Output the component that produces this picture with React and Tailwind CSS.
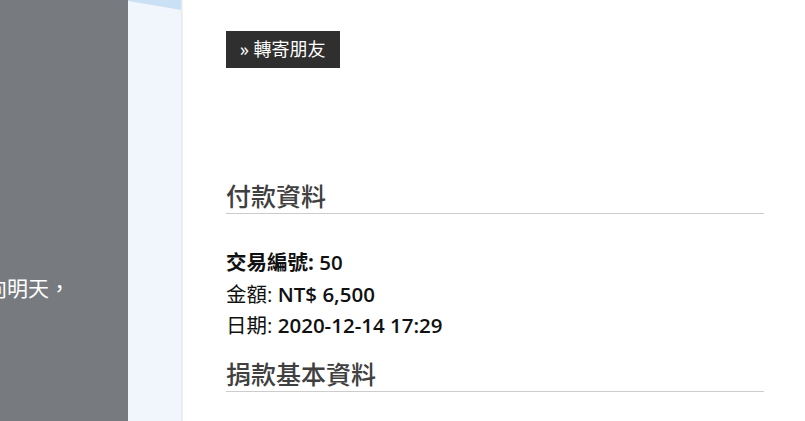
const rows = [
  { label: '交易編號', value: '50', bold: true },
  { label: '金額', value: 'NT$ 6,500' },
  { label: '日期', value: '2020-12-14 17:29' },
]

function SectionTitle({ children, className = '' }) {
  return (
    <h2 className={`border-b border-[#cccccc] pb-[2px] text-[25px] font-medium leading-[30px] text-[#404040] ${className}`}>
      {children}
    </h2>
  )
}

export default function App() {
  return (
    <div
      className="flex h-[421px] w-[805px] overflow-hidden bg-white"
      style={{ fontFamily: '"Open Sans", "Noto Sans CJK TC", sans-serif' }}
    >
      {/* left hero panel */}
      <div className="flex w-[128px] shrink-0 items-start overflow-hidden bg-[#777b7f] pt-[272px]">
        <p className="ml-[-14px] whitespace-nowrap text-[21px] leading-[32px] text-white">向明天，</p>
      </div>

      {/* light strip */}
      <div className="relative w-[53px] shrink-0 bg-[#f1f6fc]">
        <svg className="absolute left-0 top-0" width="53" height="12" viewBox="0 0 53 12">
          <polygon points="0,0 53,0 53,10 30,6 0,1" fill="#c9e0f5" />
        </svg>
      </div>
      <div className="w-[2px] shrink-0 bg-gradient-to-r from-[#e3e7ec] to-[#f4f5f7]" />

      {/* main content */}
      <div className="flex-1 pl-[43px] pr-[41px] pt-[31px]">
        <button className="flex h-[37px] items-center bg-[#2f2f2f] px-[14px] text-[18px] text-white">
          » 轉寄朋友
        </button>

        <SectionTitle className="mt-[113px]">付款資料</SectionTitle>

        <div className="mt-[33px] text-[20.5px] leading-[31.5px] text-[#111111]">
          {rows.map((r) => (
            <div key={r.label}>
              <span className={r.bold ? 'font-bold' : 'font-normal'}>{r.label}:</span>{' '}
              <span className="font-semibold">{r.value}</span>
            </div>
          ))}
        </div>

        <SectionTitle className="mt-[17px]">捐款基本資料</SectionTitle>
      </div>
    </div>
  )
}
